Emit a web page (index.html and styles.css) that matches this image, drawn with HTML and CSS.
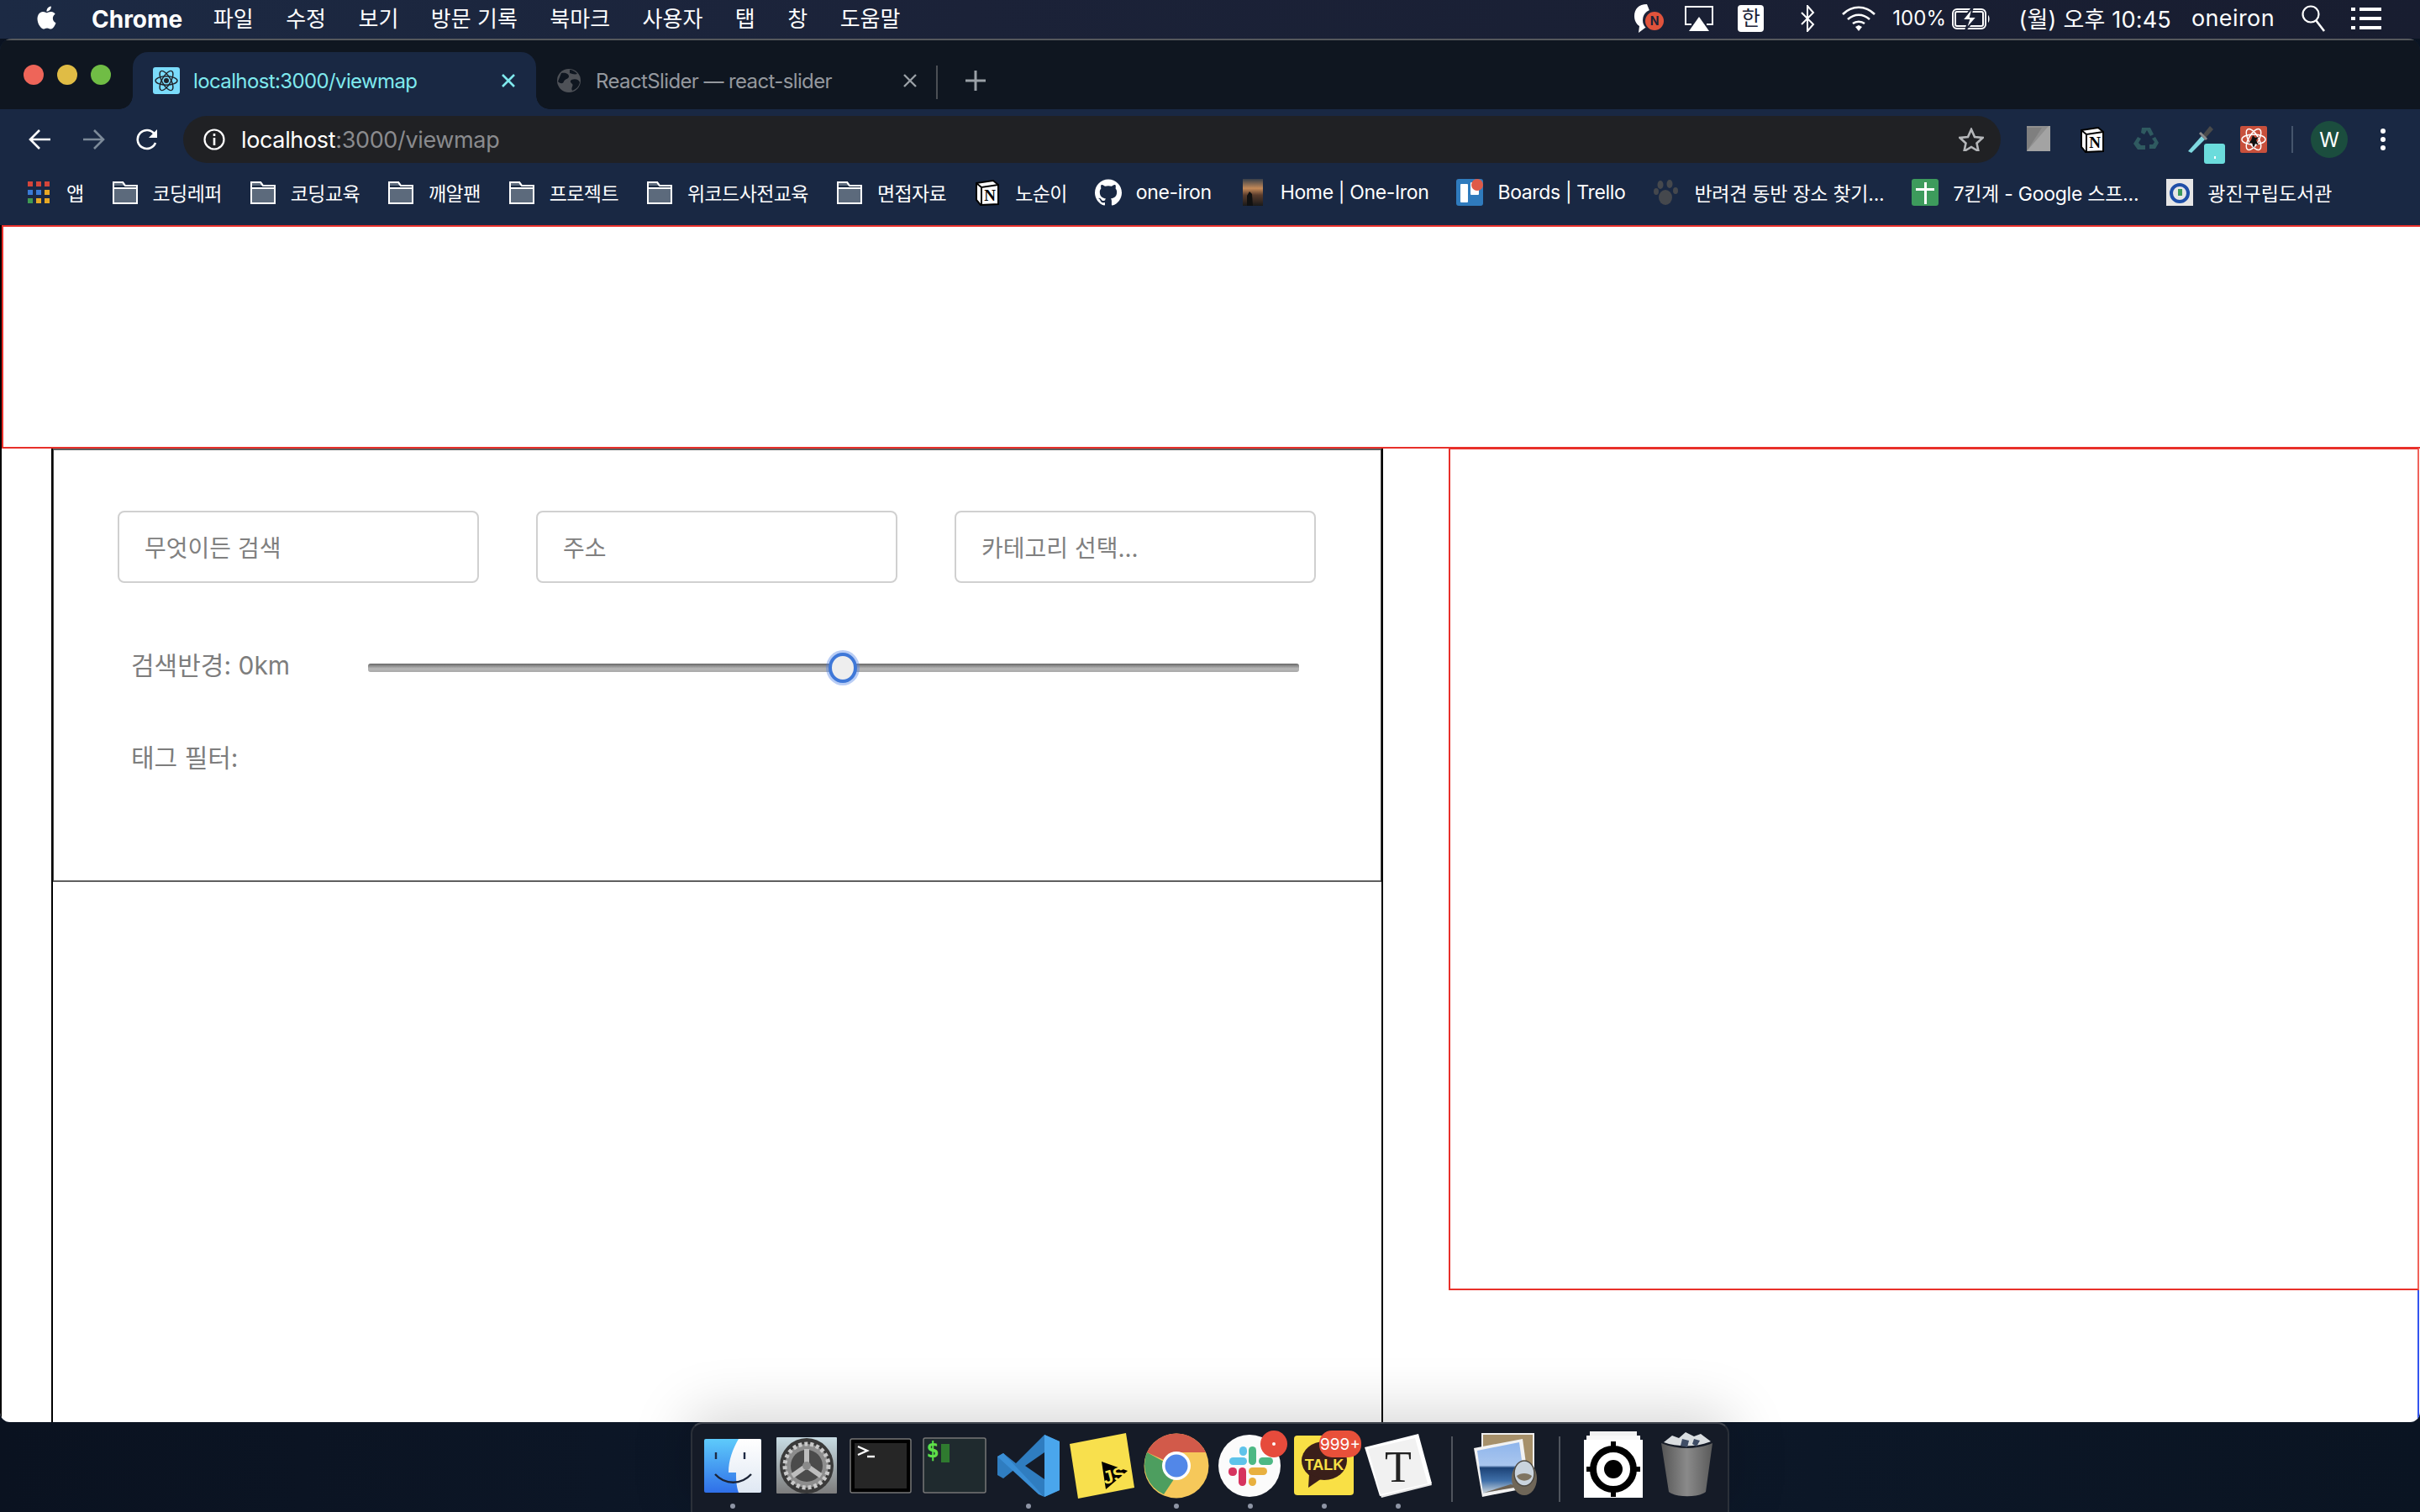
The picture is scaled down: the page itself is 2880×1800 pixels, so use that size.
FILE: index.html
```html
<!DOCTYPE html>
<html lang="ko">
<head>
<meta charset="utf-8">
<title>localhost:3000/viewmap</title>
<link rel="stylesheet" href="styles.css">
</head>
<body>
<svg class="defs" width="0" height="0">
  <symbol id="folder" viewBox="0 0 32 32">
    <path d="M2 4h11l3 4h14v21H2z" fill="#5c6a7c" stroke="#fff" stroke-width="2"/>
    <path d="M2 8h28v3H2z" fill="#1a2a42" stroke="none"/>
    <path d="M2 4h11l3 4h14v3H2z" fill="none" stroke="#fff" stroke-width="2"/>
  </symbol>
</svg>
<header class="menubar">
  <svg class="apple" viewBox="0 0 24 24"><path fill="#fff" d="M12.152 6.896c-.948 0-2.415-1.078-3.96-1.04-2.04.027-3.91 1.183-4.961 3.014-2.117 3.675-.546 9.103 1.519 12.09 1.013 1.454 2.208 3.09 3.792 3.039 1.52-.065 2.09-.987 3.935-.987 1.831 0 2.35.987 3.96.948 1.637-.026 2.676-1.48 3.676-2.948 1.156-1.688 1.636-3.325 1.662-3.415-.039-.013-3.182-1.221-3.22-4.857-.026-3.04 2.48-4.494 2.597-4.559-1.429-2.09-3.623-2.324-4.39-2.376-2-.156-3.675 1.09-4.61 1.09zM15.53 3.83c.843-1.012 1.4-2.427 1.245-3.83-1.207.052-2.662.805-3.532 1.818-.78.896-1.454 2.338-1.273 3.714 1.338.104 2.715-.688 3.559-1.701"/></svg>
  <nav class="menu">
    <span class="app">Chrome</span><span class="mi">파일</span><span class="mi">수정</span><span class="mi">보기</span><span class="mi">방문 기록</span><span class="mi">북마크</span><span class="mi">사용자</span><span class="mi">탭</span><span class="mi">창</span><span class="mi">도움말</span>
  </nav>
  <div class="status">
    <svg class="st-talk" viewBox="0 0 36 36"><path d="M16 1C6 1 1 7 1 15c0 6 3 10 6 12l-1 8 8-6c5 1 9 0 12-3z" fill="#fff"/><circle cx="24" cy="20" r="13" fill="#1b2237"/><circle cx="25" cy="21" r="11" fill="#e0533c"/><text x="25" y="26" class="st-n" text-anchor="middle">N</text></svg>
    <svg class="st-air" viewBox="0 0 36 32"><path d="M9 23H2V2h32v21h-7" fill="none" stroke="#fff" stroke-width="2"/><path d="M18 14l12 17H6z" fill="#fff"/></svg>
    <span class="st-han">한</span>
    <svg class="st-bt" viewBox="0 0 18 32"><path d="M2 9l14 14-7 8V1l7 8L2 23" fill="none" stroke="#fff" stroke-width="2"/></svg>
    <svg class="st-wifi" viewBox="0 0 40 32"><path d="M1 11c11-11 27-11 38 0M7 17c8-7 18-7 26 0M13 22c4-3 10-3 14 0" fill="none" stroke="#fff" stroke-width="2.6"/><path d="M16 26l4-2 4 2-4 5z" fill="#fff"/></svg>
    <span class="st-pct">100%</span>
    <svg class="st-batt" viewBox="0 0 46 28"><rect x="1" y="3" width="39" height="23" rx="5" fill="none" stroke="#fff" stroke-width="2"/><rect x="4" y="6" width="33" height="17" rx="2" fill="none" stroke="#fff" stroke-width="2"/><path d="M43 10c2 1 2 8 0 9z" fill="#fff"/><path d="M25 0L12 16h8l-4 12 14-16h-8z" fill="#fff" stroke="#1b2237" stroke-width="2"/></svg>
    <span class="st-time">(월) 오후 10:45</span>
    <span class="st-user">oneiron</span>
    <svg class="st-search" viewBox="0 0 28 32"><circle cx="11" cy="11" r="9.5" fill="none" stroke="#fff" stroke-width="2.2"/><path d="M17 18l10 13" stroke="#fff" stroke-width="2.6"/></svg>
    <svg class="st-list" viewBox="0 0 36 26"><path d="M0 2h5M10 2h26M0 13h5M10 13h26M0 24h5M10 24h26" stroke="#fff" stroke-width="4"/></svg>
  </div>
</header>

<main class="window">
  <div class="tabstrip">
    <div class="lights"><i class="light red"></i><i class="light yellow"></i><i class="light green"></i></div>
    <div class="tab active">
      <svg class="favicon" viewBox="0 0 32 32"><rect width="32" height="32" rx="3" fill="#7bdcfb"/><g fill="none" stroke="#20232a" stroke-width="1.4"><ellipse cx="16" cy="16" rx="13" ry="5.2"/><ellipse cx="16" cy="16" rx="13" ry="5.2" transform="rotate(60 16 16)"/><ellipse cx="16" cy="16" rx="13" ry="5.2" transform="rotate(120 16 16)"/></g><circle cx="16" cy="16" r="3" fill="#20232a"/></svg>
      <span class="tab-title">localhost:3000/viewmap</span>
      <svg class="tab-x" viewBox="0 0 18 18"><path d="M2 2l14 14M16 2L2 16" stroke="#7fe9ee" stroke-width="2.6"/></svg>
    </div>
    <div class="tab idle">
      <svg class="globe" viewBox="0 0 28 28"><circle cx="14" cy="14" r="14" fill="#4e5157"/><path d="M5 5c5-1 9 1 9 4s-5 3-6 6-4 3-7 0zM17 13c5-2 9 0 10 3-1 5-4 8-9 10-2-4 2-6 0-8s-3-3-1-5zM15 1c3 0 7 2 9 5-3 1-6 0-9-1z" fill="#0f1620"/></svg>
      <span class="tab-title">ReactSlider — react-slider</span>
      <svg class="tab-x" viewBox="0 0 18 18"><path d="M2 2l14 14M16 2L2 16" stroke="#9aa0a6" stroke-width="2.4"/></svg>
    </div>
    <i class="tab-sep"></i>
    <svg class="plus" viewBox="0 0 24 24"><path d="M12 0v24M0 12h24" stroke="#9aa0a6" stroke-width="3"/></svg>
  </div>

  <div class="toolbar">
    <div class="nav-btn"><svg class="nav-ic" viewBox="0 0 27 26"><path d="M26 13H3M13 2L2 13l11 11" fill="none" stroke="#fff" stroke-width="2.6"/></svg></div>
    <div class="nav-btn"><svg class="nav-ic" viewBox="0 0 27 26"><path d="M1 13h23M14 2l11 11-11 11" fill="none" stroke="#7c8a99" stroke-width="2.6"/></svg></div>
    <div class="nav-btn"><svg class="nav-ic" viewBox="0 0 27 26"><path d="M23 17a11 11 0 1 1-1-10" fill="none" stroke="#fff" stroke-width="2.6"/><path d="M25 1v10H15z" fill="#fff"/></svg></div>
    <div class="omnibox">
      <svg class="info" viewBox="0 0 26 26"><circle cx="13" cy="13" r="11.5" fill="none" stroke="#fff" stroke-width="2.2"/><path d="M13 11v9M13 6v3" stroke="#fff" stroke-width="2.6"/></svg>
      <span class="url"><b class="url-host">localhost</b>:3000/viewmap</span>
      <svg class="star" viewBox="0 0 30 28"><path d="M15 2l4 9 9.500 1-7 6.500 2 9.500-8.500-5-8.500 5 2-9.500-7-6.500 9.500-1z" fill="none" stroke="#b4b6b9" stroke-width="2.600"/></svg>
    </div>
    <div class="exts">
      <div class="ext"><svg class="ext-ic" viewBox="0 0 32 32"><rect x="2" width="28" height="30" fill="#8f8f8f"/><path d="M2 30L20 2H2z" fill="#5c5c5c" opacity=".3"/><path d="M2 30h28V0h-2L2 30z" fill="#a3a3a3"/></svg></div>
      <div class="ext"><svg class="ext-ic" viewBox="0 0 32 32"><path d="M3 5l20-3 6 5v23l-21 1-5-6z" fill="#fff" stroke="#000" stroke-width="2"/><path d="M3 5l6 5 20-3M9 10v20" fill="none" stroke="#000" stroke-width="2"/><text x="19" y="26" class="notion-n" text-anchor="middle">N</text></svg></div>
      <div class="ext"><svg class="ext-ic" viewBox="0 0 32 32"><path d="M11 2h10l4 8-4 2-4-7-3 5-4-2zM27 13l4 7-4 7h-7v-5h4l2-3-3-4zM6 13l4 2-3 5 3 3h5v5H6l-5-7z" fill="#2f5a60"/></svg></div>
      <div class="ext ext-drop"><svg class="ext-ic" viewBox="0 0 32 32"><path d="M2 30L18 12l4 4L6 32z" fill="#7fd8e0"/><path d="M20 10l8-10 4 4-9 10z" fill="#4a4a4a"/><path d="M16 8l8 8" stroke="#8a8a8a" stroke-width="3"/></svg><i class="ext-badge"><b class="ext-badge-dot"></b></i></div>
      <div class="ext"><svg class="ext-ic" viewBox="0 0 32 32"><rect width="32" height="32" rx="2" fill="#c8503c"/><g fill="none" stroke="#fff" stroke-width="1.500"><ellipse cx="16" cy="16" rx="14" ry="6"/><ellipse cx="16" cy="16" rx="14" ry="6" transform="rotate(60 16 16)"/><ellipse cx="16" cy="16" rx="14" ry="6" transform="rotate(120 16 16)"/></g><path d="M15 11l3 3 4-1-3 4 3 6-4-2-2 5-2-6-4 1 3-4z" fill="#111"/></svg></div>
    </div>
    <i class="tool-sep"></i>
    <span class="avatar">W</span>
    <svg class="dots" viewBox="0 0 8 28"><circle cx="4" cy="4" r="3" fill="#fff"/><circle cx="4" cy="14" r="3" fill="#fff"/><circle cx="4" cy="24" r="3" fill="#fff"/></svg>
  </div>

  <div class="bookmarks">
    <a class="bm"><svg class="bm-grid" viewBox="0 0 26 26"><path d="M0 0h6v6H0z" fill="#d4453a"/><path d="M10 0h6v6h-6z" fill="#d4453a"/><path d="M20 0h6v6h-6z" fill="#d4453a"/><path d="M0 10h6v6H0z" fill="#3a7bd5"/><path d="M10 10h6v6h-6z" fill="#3a7bd5"/><path d="M20 10h6v6h-6z" fill="#e6a826"/><path d="M0 20h6v6H0z" fill="#3f9a52"/><path d="M10 20h6v6h-6z" fill="#e6a826"/><path d="M20 20h6v6h-6z" fill="#e6a826"/></svg><span class="ko">앱</span></a>
    <a class="bm"><svg class="bm-ic"><use href="#folder"/></svg><span class="ko">코딩레퍼</span></a>
    <a class="bm"><svg class="bm-ic"><use href="#folder"/></svg><span class="ko">코딩교육</span></a>
    <a class="bm"><svg class="bm-ic"><use href="#folder"/></svg><span class="ko">깨알팬</span></a>
    <a class="bm"><svg class="bm-ic"><use href="#folder"/></svg><span class="ko">프로젝트</span></a>
    <a class="bm"><svg class="bm-ic"><use href="#folder"/></svg><span class="ko">위코드사전교육</span></a>
    <a class="bm"><svg class="bm-ic"><use href="#folder"/></svg><span class="ko">면접자료</span></a>
    <a class="bm"><svg class="bm-ic" viewBox="0 0 32 32"><path d="M3 5l20-3 6 5v23l-21 1-5-6z" fill="#fff" stroke="#000" stroke-width="2"/><path d="M3 5l6 5 20-3M9 10v20" fill="none" stroke="#000" stroke-width="2"/><text x="19" y="26" class="notion-n" text-anchor="middle">N</text></svg><span class="ko">노순이</span></a>
    <a class="bm"><svg class="bm-ic" viewBox="0 0 24 24"><path fill="#fff" d="M12 .297c-6.630 0-12 5.373-12 12 0 5.303 3.438 9.800 8.205 11.385.6.113.82-.258.82-.577 0-.285-.01-1.040-.015-2.040-3.338.724-4.042-1.610-4.042-1.610C4.422 18.070 3.633 17.700 3.633 17.700c-1.087-.744.084-.729.084-.729 1.205.084 1.838 1.236 1.838 1.236 1.070 1.835 2.809 1.305 3.495.998.108-.776.417-1.305.76-1.605-2.665-.3-5.466-1.332-5.466-5.930 0-1.310.465-2.380 1.235-3.220-.135-.303-.54-1.523.105-3.176 0 0 1.005-.322 3.300 1.230.96-.267 1.980-.399 3-.405 1.020.006 2.040.138 3 .405 2.280-1.552 3.285-1.230 3.285-1.230.645 1.653.24 2.873.12 3.176.765.84 1.230 1.910 1.230 3.220 0 4.610-2.805 5.625-5.475 5.920.42.36.81 1.096.81 2.220 0 1.606-.015 2.896-.015 3.286 0 .315.21.69.825.57C20.565 22.092 24 17.592 24 12.297c0-6.627-5.373-12-12-12"/></svg><span class="en">one-iron</span></a>
    <a class="bm"><svg class="bm-ic" viewBox="0 0 32 32"><defs><linearGradient id="ph" x1="0" y1="0" x2="0" y2="1"><stop offset="0" stop-color="#39404a"/><stop offset=".35" stop-color="#c58a58"/><stop offset=".6" stop-color="#5a3c2c"/><stop offset="1" stop-color="#1a1a1a"/></linearGradient></defs><rect x="4" width="24" height="32" fill="url(#ph)"/><path d="M9 32v-12l3-5 3 3 1 14z" fill="#111"/></svg><span class="en">Home | One-Iron</span></a>
    <a class="bm"><svg class="bm-ic" viewBox="0 0 32 32"><rect width="32" height="32" rx="3" fill="#2f7bbd"/><rect x="5" y="6" width="9" height="22" rx="1" fill="#fff"/><rect x="17" y="4" width="10" height="15" rx="1" fill="#fff"/><circle cx="25" cy="7" r="7" fill="#df5a48"/></svg><span class="en">Boards | Trello</span></a>
    <a class="bm"><svg class="bm-ic" viewBox="0 0 32 32"><g fill="#45484d"><ellipse cx="9" cy="7" rx="3.500" ry="5"/><ellipse cx="20" cy="6" rx="3.500" ry="5"/><ellipse cx="4" cy="15" rx="3" ry="4"/><ellipse cx="27" cy="14" rx="3" ry="4"/><ellipse cx="15" cy="22" rx="8" ry="9"/></g></svg><span class="ko-wide">반려견 동반 장소 찾기...</span></a>
    <a class="bm"><svg class="bm-ic" viewBox="0 0 32 32"><rect width="32" height="32" rx="3" fill="#3d9b5c"/><path d="M15 4h3v26h-3zM5 11h22v3H5z" fill="#fff"/></svg><span class="ko-wide">7킨계 - Google 스프...</span></a>
    <a class="bm"><svg class="bm-ic" viewBox="0 0 32 32"><rect width="32" height="32" fill="#e6e6e6"/><circle cx="16" cy="17" r="10" fill="none" stroke="#1f4fa8" stroke-width="4"/><path d="M14 12h5v8h-5z" fill="#3a9a5c"/></svg><span class="ko-tight">광진구립도서관</span></a>
  </div>

  <div class="page">
    <div class="red-header"></div>
    <div class="content">
      <section class="left-col">
        <div class="filter-panel">
          <div class="fields">
            <input class="field" placeholder="무엇이든 검색">
            <input class="field" placeholder="주소">
            <input class="field" placeholder="카테고리 선택...">
          </div>
          <div class="radius-row">
            <span class="flabel">검색반경: 0km</span>
            <div class="slider"><i class="slider-thumb"></i></div>
          </div>
          <div class="flabel tag-label">태그 필터:</div>
        </div>
      </section>
      <aside class="right-col">
        <div class="map-box"></div>
        <div class="below-map"></div>
      </aside>
    </div>
  </div>
</main>

<footer class="dockrow">
  <div class="dock">
    <div class="cell"><svg class="dic" viewBox="0 0 80 80"><defs><linearGradient id="fb" x1="0" y1="0" x2="0" y2="1"><stop offset="0" stop-color="#5ecbfb"/><stop offset="1" stop-color="#2f6fe8"/></linearGradient><linearGradient id="fw" x1="0" y1="0" x2="0" y2="1"><stop offset="0" stop-color="#fff"/><stop offset="1" stop-color="#dfe8f3"/></linearGradient></defs><rect x="6" y="8" width="68" height="64" rx="2" fill="url(#fb)"/><path d="M47 8h25a2 2 0 0 1 2 2v60a2 2 0 0 1-2 2H47c-3-9-3-16-3-24H35c0-15 5-28 12-40z" fill="url(#fw)"/><path d="M20 24v8M54 24v8" stroke="#1e2a44" stroke-width="2.400"/><path d="M19 50c12 13 31 13 43 0" fill="none" stroke="#1c2436" stroke-width="2.400"/></svg><i class="dot"></i></div>
    <div class="cell"><svg class="dic" viewBox="0 0 80 80"><defs><linearGradient id="pb" x1="0" y1="0" x2="0" y2="1"><stop offset="0" stop-color="#c8dce4"/><stop offset="1" stop-color="#7d7d7d"/></linearGradient></defs><rect x="4" y="6" width="72" height="67" rx="1" fill="url(#pb)"/><ellipse cx="40" cy="40" rx="32" ry="33" fill="#3a3a3a"/><circle cx="40" cy="40" r="26" fill="#8d8d8d" stroke="#c9c9c9" stroke-width="5" stroke-dasharray="4 3"/><circle cx="40" cy="40" r="19" fill="#4b4b4b"/><path d="M40 40V20M40 40l-17 12M40 40l17 12" stroke="#bdbdbd" stroke-width="6"/><circle cx="40" cy="40" r="5" fill="#8a8a8a"/></svg><i class="dot dot-off"></i></div>
    <div class="cell"><svg class="dic" viewBox="0 0 80 80"><rect x="4" y="8" width="72" height="64" rx="2" fill="#000" stroke="#777" stroke-width="1.500"/><rect x="9" y="13" width="62" height="54" fill="#262626"/><path d="M13 17l11 5-11 5" fill="none" stroke="#fff" stroke-width="2.400"/><path d="M24 29h9" stroke="#fff" stroke-width="2.400"/></svg><i class="dot dot-off"></i></div>
    <div class="cell"><svg class="dic" viewBox="0 0 80 80"><rect x="3" y="7" width="74" height="65" rx="2" fill="#1f2a2e" stroke="#777" stroke-width="1.500"/><text x="14" y="30" class="iterm-s" text-anchor="middle">$</text><rect x="24" y="14" width="10" height="22" fill="#2f7a2f"/></svg><i class="dot dot-off"></i></div>
    <div class="cell"><svg class="dic" viewBox="0 0 80 80"><path d="M59 3L25 37 10 25l-7 4v22l7 4 15-12 34 34 18-8V11z" fill="#2f7dc0"/><path d="M59 3l18 8v58l-18 8z" fill="#4aa6ec"/><path d="M59 24L36 40l23 16z" fill="#151b27"/><path d="M3 29l7-4 49 52-7-3z" fill="#3a8fd6"/></svg><i class="dot"></i></div>
    <div class="cell"><svg class="dic" viewBox="0 0 80 80"><path d="M1 14L68 1l10 65-67 13z" fill="#f8e04d"/><path d="M39 35l31 11-26 22z" fill="#000"/><text x="54" y="59" class="js-t" text-anchor="middle" transform="rotate(-15 54 52)">JS</text></svg><i class="dot dot-off"></i></div>
    <div class="cell"><svg class="dic" viewBox="0 0 80 80"><circle cx="40" cy="40" r="38.500" fill="#f6c85a"/><path d="M5 24A38.500 38.500 0 0 1 75 24H40a16 16 0 0 0-15 9z" fill="#d25a4a"/><path d="M5 24l20 11 12 21-12 18A38.500 38.500 0 0 1 5 24z" fill="#4d9e5f"/><circle cx="40" cy="40" r="17" fill="#fff"/><circle cx="40" cy="40" r="13.500" fill="#5287e8"/></svg><i class="dot"></i></div>
    <div class="cell"><svg class="dic dic-over" viewBox="0 0 80 80"><circle cx="39" cy="40" r="37" fill="#fbfbfb"/><rect x="38" y="17" width="9" height="22" rx="4.500" fill="#4db884"/><rect x="50" y="30" width="17" height="9" rx="4.500" fill="#4db884"/><rect x="15" y="30" width="21" height="9" rx="4.500" fill="#5ec3ea"/><rect x="27" y="17" width="9" height="11" rx="4.500" fill="#5ec3ea"/><rect x="26" y="42" width="9" height="22" rx="4.500" fill="#d6345f"/><rect x="14" y="42" width="10" height="10" rx="4.500" fill="#d6345f"/><rect x="38" y="42" width="22" height="9" rx="4.500" fill="#e8b03f"/><rect x="38" y="54" width="9" height="10" rx="4.500" fill="#e8b03f"/><circle cx="68" cy="14" r="16" fill="#e64b3c"/><circle cx="68" cy="14" r="2" fill="#fff"/></svg><i class="dot"></i></div>
    <div class="cell"><svg class="dic dic-over" viewBox="0 0 80 80"><rect x="4" y="4" width="71" height="71" rx="4" fill="#f9e045"/><ellipse cx="40" cy="34" rx="27" ry="23" fill="#3a1f1a"/><path d="M22 50l-1 16 16-11z" fill="#3a1f1a"/><text x="40" y="45" class="talk" text-anchor="middle">TALK</text><rect x="34" y="-2" width="50" height="32" rx="15" fill="#e8503a"/><text x="59" y="21" class="badge-t" text-anchor="middle">999+</text></svg><i class="dot"></i></div>
    <div class="cell"><svg class="dic dic-over" viewBox="0 0 80 80"><path d="M2 21l60-14 18 56-60 15z" fill="#e8e8e8"/><path d="M0 18L64 2l16 59-62 15z" fill="#fff"/><path d="M4 20L60 7l15 54-56 13z" fill="#f1f1f1"/><text x="40" y="59" class="typora-t" text-anchor="middle">T</text></svg><i class="dot"></i></div>
    <i class="dock-sep"></i>
    <div class="cell"><svg class="dic" viewBox="0 0 80 80"><defs><linearGradient id="sea" x1="0" y1="0" x2="0" y2="1"><stop offset="0" stop-color="#8fb5ec"/><stop offset=".45" stop-color="#a9c6ee"/><stop offset=".5" stop-color="#1d4377"/><stop offset=".75" stop-color="#3f6fa8"/><stop offset="1" stop-color="#cfd8de"/></linearGradient></defs><rect x="12" y="2" width="61" height="56" fill="#a6906a" stroke="#eee" stroke-width="2"/><path d="M2 19L60 8l8 58-56 11z" fill="#f2f2f2"/><path d="M6 22l50-10 7 50-50 11z" fill="url(#sea)"/><path d="M14 72l32-10 10 3z" fill="#6d6152"/><ellipse cx="62" cy="55" rx="15" ry="20" fill="#6f6658"/><ellipse cx="62" cy="49" rx="12" ry="15" fill="#c9d3dd" stroke="#4e4a43" stroke-width="1.500"/><path d="M53 52c5-4 13-4 18 0-2 7-15 8-18 0z" fill="#7f7461"/></svg><i class="dot dot-off"></i></div>
    <i class="dock-sep"></i>
    <div class="cell"><svg class="dic" viewBox="0 0 80 80"><rect x="12" y="-1" width="56" height="10" fill="#f1f1f1"/><rect x="8" y="4" width="64" height="10" fill="#f8f8f8"/><rect x="5" y="9" width="70" height="69" fill="#fff"/><circle cx="40" cy="44" r="24" fill="#fff" stroke="#000" stroke-width="8"/><circle cx="40" cy="44" r="11" fill="#000"/><path d="M40 11v10M40 67v10M8 44h10M62 44h10" stroke="#000" stroke-width="6"/></svg><i class="dot dot-off"></i></div>
    <div class="cell"><svg class="dic" viewBox="0 0 80 80"><defs><linearGradient id="tr" x1="0" y1="0" x2="1" y2="0"><stop offset="0" stop-color="#555"/><stop offset=".5" stop-color="#8a8a8a"/><stop offset="1" stop-color="#5a5a5a"/></linearGradient></defs><path d="M9 13c20 8 42 8 61 0l-8 58c-8 7-36 7-44 0z" fill="url(#tr)"/><path d="M12 12l10-8 8 3 8-7 10 5 8-3 12 9c-15 7-40 7-56 1z" fill="#d9dde0"/><path d="M34 8l8 2-2 8-8-2zM48 8l7 2-4 7-5-3z" fill="#3f4d66"/></svg><i class="dot dot-off"></i></div>
  </div>
</footer>
</body>
</html>
```

FILE: styles.css
```css
* { box-sizing: border-box; }
html, body { margin: 0; padding: 0; }
body {
  width: 2880px;
  height: 1800px;
  overflow: hidden;
  display: flex;
  flex-direction: column;
  background: linear-gradient(90deg, #0a1220 0%, #0e1a2c 50%, #0a1422 100%);
  font-family: "Inter", "Noto Sans CJK KR", sans-serif;
  color: #fff;
}
.defs { position: absolute; }
i { display: block; font-style: normal; }

/* menu bar */
.menubar {
  height: 46px;
  flex: none;
  display: flex;
  align-items: center;
  background: linear-gradient(90deg, #1c2a44 0%, #1b2238 40%, #181d30 100%);
  font-size: 26px;
}
.apple { width: 27px; height: 32px; margin-left: 42px; margin-top: -4px; }
.menu { display: flex; align-items: center; gap: 38.5px; margin-left: 40px; white-space: nowrap; }
.menu .app { font-weight: 700; font-size: 28px; margin-right: -2px; }
.mi { margin-bottom: 5px; }
.status { margin-left: auto; margin-bottom: 3px; display: flex; align-items: center; white-space: nowrap; }
.st-talk { width: 36px; height: 36px; }
.st-air { width: 36px; height: 32px; margin-left: 24px; }
.st-han { width: 31px; height: 32px; margin-left: 28px; background: #fff; color: #1b2237; border-radius: 4px; font-size: 24px; line-height: 32px; text-align: center; }
.st-bt { width: 18px; height: 32px; margin-left: 43px; }
.st-wifi { width: 40px; height: 32px; margin-left: 32px; }
.st-pct { margin-left: 20px; font-size: 24px; }
.st-batt { width: 46px; height: 28px; margin-left: 7px; }
.st-time { margin-left: 33.5px; font-size: 27px; letter-spacing: .2px; }
.st-user { margin-left: 24px; font-size: 27px; letter-spacing: .4px; }
.st-search { width: 28px; height: 32px; margin-left: 32px; }
.st-list { width: 36px; height: 26px; margin-left: 31px; margin-right: 46px; }
.st-n { font: 700 14px "Inter", sans-serif; fill: #1b2237; }

/* window */
.window {
  flex: 1;
  min-height: 0;
  display: flex;
  flex-direction: column;
  background: #192843;
  border-radius: 14px 14px 12px 12px;
  overflow: hidden;
}
.tabstrip {
  height: 84px;
  flex: none;
  display: flex;
  align-items: flex-end;
  background: #0f1620;
  border-top: 2px solid #55585c;
}
.lights { display: flex; gap: 16px; padding-left: 28px; width: 158px; align-self: flex-start; margin-top: 29px; }
.light { width: 24px; height: 24px; border-radius: 50%; }
.red { background: #ee6559; }
.yellow { background: #e0bc45; }
.green { background: #70bd45; }
.tab { height: 68px; display: flex; align-items: center; font-size: 24px; letter-spacing: -.62px; position: relative; white-space: nowrap; }
.tab.active { width: 480px; padding: 0 24px; gap: 16px; background: #192843; color: #7fe9ee; border-radius: 18px 18px 0 0; }
.tab.active::before, .tab.active::after { content: ""; position: absolute; bottom: 0; width: 16px; height: 16px; }
.tab.active::before { left: -16px; background: radial-gradient(circle at 0 0, #0f1620 15.5px, #192843 16px); }
.tab.active::after { right: -16px; background: radial-gradient(circle at 100% 0, #0f1620 15.5px, #192843 16px); }
.tab.idle { width: 476px; padding: 0 22px 0 25px; gap: 18px; color: #94989e; }
.favicon { width: 32px; height: 32px; flex: none; }
.globe { width: 28px; height: 28px; flex: none; }
.tab-title { flex: 1; }
.tab-x { width: 18px; height: 18px; flex: none; }
.tab-sep { width: 2px; height: 40px; background: #4b4f55; align-self: flex-end; margin-bottom: 12px; }
.plus { width: 24px; height: 24px; margin-left: 33px; margin-bottom: 22px; }

.toolbar { height: 64px; flex: none; display: flex; align-items: center; padding: 8px 0 0 15px; }
.nav-btn { width: 64px; display: flex; justify-content: center; }
.nav-ic { width: 27px; height: 26px; }
.omnibox { margin-left: 11px; width: 2163px; height: 56px; background: #202124; border-radius: 28px; display: flex; align-items: center; padding: 0 20px 0 24px; }
.info { width: 26px; height: 26px; flex: none; }
.url { margin-left: 19px; font-size: 27px; color: #8a8b8e; flex: 1; letter-spacing: -.35px; }
.url-host { color: #fff; font-weight: 400; }
.star { width: 30px; height: 28px; }
.exts { display: flex; margin-left: 13px; }
.ext { width: 64px; display: flex; justify-content: center; position: relative; }
.ext-ic { width: 32px; height: 32px; }
.ext-badge { position: absolute; left: 37px; top: 21px; width: 25px; height: 24px; background: #6bdcdc; border-radius: 3px; display: flex; align-items: flex-end; justify-content: center; padding-bottom: 6px; }
.ext-badge-dot { width: 2px; height: 3px; background: #fff; }
.tool-sep { width: 2px; height: 32px; background: #45556c; margin-left: 13px; }
.avatar { width: 44px; height: 44px; margin-left: 21px; border-radius: 50%; background: #1b4d3e; font-size: 24px; display: flex; align-items: center; justify-content: center; }
.dots { width: 8px; height: 28px; margin-left: 38px; }

.bookmarks { height: 74px; flex: none; display: flex; align-items: center; gap: 33px; padding: 0 0 4px 33px; font-size: 23px; white-space: nowrap; }
.bm { display: flex; align-items: center; gap: 17px; color: #fff; }
.bm-ic { width: 32px; height: 32px; flex: none; }
.bm-grid { width: 26px; height: 26px; flex: none; margin-right: 3px; }
.ko { letter-spacing: -.6px; }
.ko-wide { letter-spacing: -.25px; }
.ko-tight { letter-spacing: 0; }
.en { letter-spacing: -.35px; }
.notion-n { font: 700 19px "Liberation Serif", serif; fill: #000; }

/* page */
.page { flex: 1; min-height: 0; background: #fff; border-left: 2px solid #000; display: flex; flex-direction: column; }
.red-header { height: 266px; flex: none; border: 2px solid #e8302a; border-right: 0; }
.content { flex: 1; min-height: 0; display: flex; align-items: stretch; }
.left-col { width: 1585px; margin-left: 59px; border-left: 2px solid #000; border-right: 2px solid #000; flex: none; }
.filter-panel { height: 516px; border: 2px solid #5f5f5f; border-left-color: #444; border-right-color: #444; border-left-width: 1px; border-right-width: 1px; padding: 72px 76px 0 76px; }
.fields { display: flex; gap: 68px; }
.field { width: 430px; height: 86px; padding: 3px 30px 0; border: 2px solid #d0d0d0; border-radius: 8px; font: 28px "Inter", "Noto Sans CJK KR", sans-serif; background: #fff; outline: 0; }
.field::placeholder { color: #808080; opacity: 1; }
.radius-row { display: flex; align-items: center; margin-top: 74px; padding-left: 16px; }
.flabel { font-size: 30px; color: #7d7d7d; white-space: nowrap; }
.radius-row .flabel { width: 282px; flex: none; }
.slider { width: 1108px; height: 10px; margin-top: 10px; background: linear-gradient(#666, #8a8a8a 25%, #b8b8b8 60%, #a8a8a8); border-radius: 3px; position: relative; }
.slider-thumb { position: absolute; left: 548px; top: -13px; width: 34px; height: 36px; border-radius: 50%; background: #eee; border: 4px solid #3f78d8; box-shadow: 0 0 0 3px rgba(80,130,230,.4); }
.tag-label { margin-top: 66px; padding-left: 16px; }
.right-col { width: 1155px; margin-left: 78px; margin-top: -1px; flex: none; display: flex; flex-direction: column; }
.map-box { height: 1003px; flex: none; border: 2px solid #e8302a; border-right-color: #f0625a; }
.below-map { flex: 1; border-right: 2px solid #3355ee; }

/* dock */
.dockrow { height: 107px; flex: none; display: flex; justify-content: center; position: relative; }
.dock { width: 1236px; height: 107px; display: flex; padding: 10px 4px 0; background: #151b27; border-top: 2px solid #3f444d; border-left: 2px solid #2b3039; border-right: 2px solid #2b3039; border-radius: 14px 14px 0 0; box-shadow: 0 -8px 70px rgba(0,0,0,.18); }
.cell { width: 88px; flex: none; display: flex; flex-direction: column; align-items: center; }
.dic { width: 80px; height: 80px; flex: none; overflow: visible; }
.dot { width: 6px; height: 6px; margin-top: 5px; border-radius: 50%; background: #8e95a5; }
.dot-off { background: transparent; }
.dock-sep { width: 2px; height: 78px; margin: 5px 19px 0; background: #4f545d; flex: none; }
.iterm-s { font: 700 26px "DejaVu Sans Mono", monospace; fill: #5fe04a; }
.js-t { font: 900 22px "Liberation Sans", sans-serif; fill: #f8e04d; }
.talk { font: 900 18px "Liberation Sans", sans-serif; fill: #f9e045; }
.badge-t { font: 400 19px "Inter", sans-serif; fill: #fff; }
.typora-t { font: 400 52px "Liberation Serif", serif; fill: #222; }
```
